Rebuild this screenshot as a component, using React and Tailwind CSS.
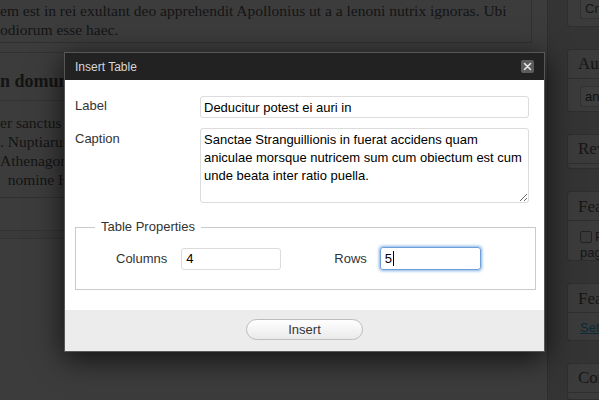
import React from "react";

const sans = "font-['Liberation_Sans',Arial,sans-serif]";
const serif = "font-['Liberation_Serif','Times_New_Roman',serif]";

function SideBox({ title, children, className = "" }) {
  return (
    <div className={`rounded-l-[3px] border border-r-0 border-[#2e2e2e] bg-[#3b3b3b] ${className}`}>
      <div className={`flex h-[29px] items-center border-b border-[#2f2f2f] pl-[10px] text-[17px] text-[#161616] ${serif}`}>
        {title}
      </div>
      {children}
    </div>
  );
}

function Background() {
  return (
    <div className="flex h-[400px] w-[599px]">
      <div className={`w-[547px] shrink-0 ${serif} text-[15.5px] text-[#141414]`}>
        <div className="h-[43px] w-[532px] border-b border-r border-[#313131] bg-[#3c3c3c] pt-[1px] leading-[19px]">
          <p className="whitespace-nowrap">em est in rei exultant deo apprehendit Apollonius ut a a lenoni nutrix ignoras. Ubi</p>
          <p className="whitespace-nowrap">odiorum esse haec.</p>
        </div>
        <div className="mt-[9px] h-[146px] w-[532px] border-y border-r border-[#313131] bg-[#3c3c3c]">
          <div className="flex h-[48px] items-end whitespace-nowrap border-b border-[#333] pb-[5px] text-[18px] font-bold">
            n domum Quae ad me
          </div>
          <div className="pt-[12px] leading-[19px]">
            <p className="whitespace-nowrap">er sanctus sit dominus</p>
            <p className="whitespace-nowrap">. Nuptiarum celebrantur</p>
            <p className="whitespace-nowrap">Athenagoras princeps</p>
            <p className="whitespace-nowrap">&nbsp;&nbsp;nomine Hellenicus</p>
          </div>
        </div>
        <div className="mt-[32px] h-[9px] w-[532px] border-y border-[#333] bg-[#3a3a3a]" />
      </div>

      <div className="flex flex-1 flex-col gap-[22px] border-l border-[#2e2e2e] bg-[#343434] pl-[19px]">
        <div className="-mt-[1px] h-[30px] rounded-bl-[3px] border border-r-0 border-t-0 border-[#2e2e2e] bg-[#3b3b3b] pl-[12px]">
          <div className={`flex h-[20px] items-center rounded-b-[3px] border border-t-0 border-[#333] bg-[#3e3e3e] pl-[4px] text-[13px] text-[#161616] ${sans}`}>
            Cre
          </div>
        </div>
        <SideBox title="Aut" className="h-[67px]">
          <div className="pl-[12px] pt-[7px]">
            <div className={`flex h-[21px] items-center rounded-l-[3px] border border-r-0 border-[#333] bg-[#3e3e3e] pl-[4px] text-[13px] text-[#111] ${sans}`}>
              an
            </div>
          </div>
        </SideBox>
        <SideBox title="Rev" className="h-[38px]" />
        <SideBox title="Fea" className="h-[72px]">
          <div className={`pl-[12px] pt-[9px] text-[13px] leading-[14px] text-[#161616] ${sans}`}>
            <div className="flex items-center gap-[3px]">
              <span className="inline-block h-[12px] w-[12px] rounded-[2px] border border-[#222] bg-[#3a3a3a]" />
              <span>P</span>
            </div>
            <div className="mt-[2px]">pag</div>
          </div>
        </SideBox>
        <SideBox title="Fea" className="h-[61px]">
          <div className={`pl-[12px] pt-[5px] text-[13px] text-[#0c2a38] underline ${sans}`}>Set</div>
        </SideBox>
        <SideBox title="Cor" className="h-[40px]" />
      </div>
    </div>
  );
}

function Dialog() {
  return (
    <div
      className={`absolute left-[64px] top-[52px] flex h-[300px] w-[481px] flex-col border border-[#575757] bg-white shadow-[0_6px_28px_rgba(0,0,0,0.75)] ${sans}`}
    >
      <div className="flex h-[27px] shrink-0 items-center justify-between bg-[#222] pl-[10px] pr-[10px]">
        <span className="text-[12px] text-[#d6d6d6]">Insert Table</span>
        <button type="button" className="flex h-[13px] w-[13px] items-center justify-center rounded-[2px] bg-[#5c5c5c]">
          <svg width="9" height="9" viewBox="0 0 9 9" aria-hidden>
            <path d="M1.5 1.5l6 6M7.5 1.5l-6 6" stroke="#e6e6e6" strokeWidth="1.6" strokeLinecap="round" />
          </svg>
        </button>
      </div>

      <div className="flex-1 pl-[10px] pt-[16px] text-[13px] text-[#333]">
        <div className="flex items-start">
          <label className="w-[125px] pt-[1px] leading-[18px]">Label</label>
          <input
            readOnly
            defaultValue="Deducitur potest ei auri in"
            className="h-[22px] w-[329px] rounded-[3px] border border-[#dcdcdc] px-[3px] text-[13px] text-black outline-none"
          />
        </div>
        <div className="mt-[10px] flex items-start">
          <label className="w-[125px] pt-[2px] leading-[18px]">Caption</label>
          <textarea
            readOnly
            defaultValue={"Sanctae Stranguillionis in fuerat accidens quam aniculae morsque nutricem sum cum obiectum est cum unde beata inter ratio puella."}
            className="h-[75px] w-[329px] resize-y rounded-[3px] border border-[#dcdcdc] pl-[3px] pr-0 pt-[2px] text-[13px] leading-[18px] text-black outline-none"
          />
        </div>

        <fieldset className="mt-[16px] w-[461px] border border-[#cacaca] pb-[19px]">
          <legend className="ml-[19px] px-[6px] leading-[16px] text-[#333]">Table Properties</legend>
          <div className="mt-[12px] flex items-center pl-[40px]">
            <label className="leading-[18px]">Columns</label>
            <input
              readOnly
              defaultValue="4"
              className="ml-[14px] h-[22px] w-[100px] rounded-[3px] border border-[#dcdcdc] px-[4px] text-[13px] text-black outline-none"
            />
            <label className="ml-[53px] leading-[18px]">Rows</label>
            <div className="ml-[13px] flex h-[23px] w-[101px] items-center rounded-[3px] border border-[#6e9fd8] px-[4px] text-[13px] text-black shadow-[0_0_3px_1px_rgba(90,150,220,0.75)]">
              <span>5</span>
              <span className="ml-[1px] inline-block h-[15px] w-px bg-black" />
            </div>
          </div>
        </fieldset>
      </div>

      <div className="flex h-[41px] shrink-0 items-start justify-center bg-[#ececec] pt-[9px]">
        <button
          type="button"
          className="h-[21px] w-[117px] rounded-full border border-[#bdbdbd] bg-gradient-to-b from-white to-[#eaeaea] text-[13px] leading-[19px] text-[#333]"
        >
          Insert
        </button>
      </div>
    </div>
  );
}

export default function App() {
  return (
    <div className="relative h-[400px] w-[599px] overflow-hidden bg-[#3c3c3c]">
      <Background />
      <Dialog />
    </div>
  );
}
